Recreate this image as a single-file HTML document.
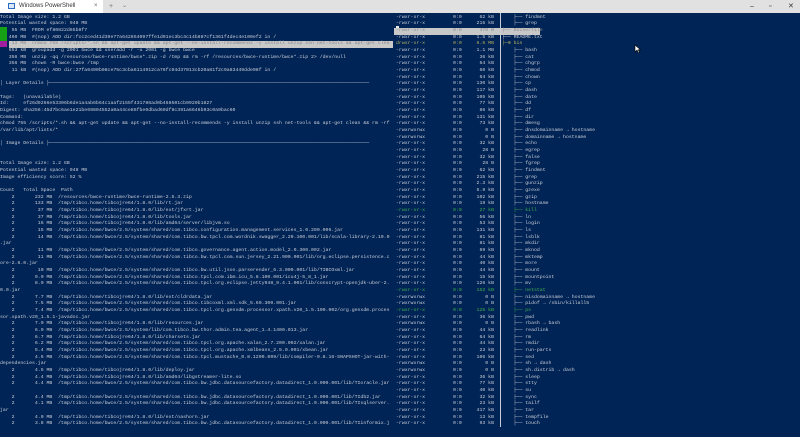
<!DOCTYPE html>
<html><head><meta charset="utf-8"><style>
*{margin:0;padding:0;box-sizing:border-box}
body{width:800px;height:437px;overflow:hidden;background:#012456;position:relative;font-family:"Liberation Mono","DejaVu Sans Mono",monospace}
.tb{position:absolute;left:0;top:0;width:800px;height:13px;background:#e1e1e1}
.tab{position:absolute;left:0;top:0;width:103px;height:13px;background:#fff;font-family:"Liberation Sans",sans-serif;font-size:6px;color:#333;line-height:13px;padding-left:19px}
.ico{position:absolute;left:8px;top:3px;width:7px;height:6px;border:1px solid #2b6cc4;background:#dbe8f8}
pre{position:absolute;font-family:"Liberation Mono","DejaVu Sans Mono",monospace;font-size:4.85px;line-height:6.67px;color:#c9cdd6;white-space:pre}
.hl{color:#8a8a8a}
.g{color:#3fb24a}.y{color:#b8b060}
</style></head><body>
<div class="tb"><div class="tab"><div class="ico"></div>Windows PowerShell<span style="position:absolute;left:94px;color:#666">×</span></div>
<span style="position:absolute;left:109px;top:0;font:7px/13px 'Liberation Sans',sans-serif;color:#777">+</span>
<span style="position:absolute;left:122px;top:0;font:6px/13px 'Liberation Sans',sans-serif;color:#777">⌄</span>
<span style="position:absolute;left:750px;top:0;font:7px/13px 'Liberation Sans',sans-serif;color:#333">–</span>
<span style="position:absolute;left:769px;top:0;font:7px/13px 'Liberation Sans',sans-serif;color:#333">▫</span>
<span style="position:absolute;left:788px;top:0;font:7px/13px 'Liberation Sans',sans-serif;color:#333">✕</span>
</div>
<div style="position:absolute;left:0;top:27px;width:7px;height:14px;background:#16a016"></div>
<div style="position:absolute;left:0;top:41px;width:7px;height:6px;background:#a020a0"></div>
<div style="position:absolute;left:9px;top:41px;width:384px;height:6.5px;background:#c8c8c8"></div>
<div style="position:absolute;left:396px;top:26px;width:3px;height:8px;background:#e8e8e8"></div>
<pre style="left:0;top:14.5px">Total Image size: 1.2 GB
Potential wasted space: 948 MB
    55 MB  FROM ef80822d65b8f7
   460 MB  #(nop) ADD dir:fcc2ced41d39e77a642854097ffe1d91ec3bc4c14b887cf1361f4dec4e100ef2 in /
<span style="color:#8a8a8a">    13 MB  chmod 755 /scripts/*.sh && apt-get update && apt-get --no-install-recommends -y install unzip ssh net-tools && apt-get clea</span>
   653 kB  groupadd -g 2001 bwce && useradd -r -u 2001 -g bwce bwce
   356 MB  unzip -qq /resources/bwce-runtime/bwce*.zip -d /tmp && rm -rf /resources/bwce-runtime/bwce*.zip 2> /dev/null
   356 MB  chown -R bwce:bwce /tmp
    11 kB  #(nop) ADD dir:27fa6490b08ce75c3cba6114912ca76fc04d37013cb20a81f2c9a83449dde08f in /

│ Layer Details ├──────────────────────────────────────────────────────────────────────────────────────────────────────────────

Tags:   (unavailable)
Id:     ef26d9266e53306b6de1a4ab6b64c1aaf2155f431786ad0b468501cb9920b1827
Digest: sha256:45d7bc6ae1e21be69804552a0a44ce86fbe0dbad60df8c391a6646b93c0a9bac60
Command:
chmod 755 /scripts/*.sh && apt-get update && apt-get --no-install-recommends -y install unzip ssh net-tools && apt-get clean && rm -rf
/var/lib/apt/lists/*

│ Image Details ├──────────────────────────────────────────────────────────────────────────────────────────────────────────────


Total Image size: 1.2 GB
Potential wasted space: 948 MB
Image efficiency score: 52 %

Count   Total Space  Path
    2       232 MB  /resources/bwce-runtime/bwce-runtime-2.5.3.zip
    2       133 MB  /tmp/tibco.home/tibcojre64/1.8.0/lib/rt.jar
    2        37 MB  /tmp/tibco.home/tibcojre64/1.8.0/lib/ext/jfxrt.jar
    2        37 MB  /tmp/tibco.home/tibcojre64/1.8.0/lib/tools.jar
    2        16 MB  /tmp/tibco.home/tibcojre64/1.8.0/lib/amd64/server/libjvm.so
    2        15 MB  /tmp/tibco.home/bwce/2.5/system/shared/com.tibco.configuration.management.services_1.0.200.006.jar
    2        14 MB  /tmp/tibco.home/bwce/2.5/system/shared/com.tibco.bw.tpcl.com.wordnik.swagger_2.20.100.001/lib/scala-library-2.10.0
.jar
    2        11 MB  /tmp/tibco.home/bwce/2.5/system/shared/com.tibco.governance.agent.action.model_2.0.300.002.jar
    2        11 MB  /tmp/tibco.home/bwce/2.5/system/shared/com.tibco.bw.tpcl.com.sun.jersey_2.21.900.001/lib/org.eclipse.persistence.c
ore-2.6.0.jar
    2        10 MB  /tmp/tibco.home/bwce/2.5/system/shared/com.tibco.bw.util.json.parserender_6.3.000.001/lib/TIBCOxml.jar
    2       9.0 MB  /tmp/tibco.home/bwce/2.5/system/shared/com.tibco.tpcl.com.ibm.icu_5.8.100.001/icu4j-5_8_1.jar
    2       8.0 MB  /tmp/tibco.home/bwce/2.5/system/shared/com.tibco.tpcl.org.eclipse.jetty948_9.4.1.001/lib/conscrypt-openjdk-uber-2.
0.0.jar
    2       7.7 MB  /tmp/tibco.home/tibcojre64/1.8.0/lib/ext/cldrdata.jar
    2       7.5 MB  /tmp/tibco.home/bwce/2.5/system/shared/com.tibco.tibcoxml.xml.sdk_5.60.300.001.jar
    2       7.4 MB  /tmp/tibco.home/bwce/2.5/system/shared/com.tibco.tpcl.org.genxdm.processor.xpath.v20_1.5.100.002/org.genxdm.proces
sor.xpath.v20_1.5.1-javadoc.jar
    2       7.0 MB  /tmp/tibco.home/tibcojre64/1.8.0/lib/resources.jar
    2       6.9 MB  /tmp/tibco.home/bwce/2.5/system/lib/com.tibco.bw.thor.admin.tea.agent_1.4.1400.013.jar
    2       6.7 MB  /tmp/tibco.home/tibcojre64/1.8.0/lib/charsets.jar
    2       6.2 MB  /tmp/tibco.home/bwce/2.5/system/shared/com.tibco.tpcl.org.apache.xalan_2.7.200.002/xalan.jar
    2       5.4 MB  /tmp/tibco.home/bwce/2.5/system/shared/com.tibco.tpcl.org.apache.xmlbeans_2.5.0.001/xbean.jar
    2       4.6 MB  /tmp/tibco.home/bwce/2.5/system/shared/com.tibco.tpcl.mustache_0.8.1200.009/lib/compiler-0.8.16-SNAPSHOT-jar-with-
dependencies.jar
    2       4.5 MB  /tmp/tibco.home/tibcojre64/1.8.0/lib/deploy.jar
    2       4.4 MB  /tmp/tibco.home/tibcojre64/1.8.0/lib/amd64/libgstreamer-lite.so
    2       4.4 MB  /tmp/tibco.home/bwce/2.5/system/shared/com.tibco.bw.jdbc.datasourcefactory.datadirect_1.0.000.001/lib/TIoracle.jar

    2       4.4 MB  /tmp/tibco.home/bwce/2.5/system/shared/com.tibco.bw.jdbc.datasourcefactory.datadirect_1.0.000.001/lib/TIdb2.jar
    2       4.1 MB  /tmp/tibco.home/bwce/2.5/system/shared/com.tibco.bw.jdbc.datasourcefactory.datadirect_1.0.000.001/lib/TIsqlserver.
jar
    2       4.0 MB  /tmp/tibco.home/tibcojre64/1.8.0/lib/ext/nashorn.jar
    2       3.8 MB  /tmp/tibco.home/bwce/2.5/system/shared/com.tibco.bw.jdbc.datasourcefactory.datadirect_1.0.000.001/lib/TIinformix.j</pre>
<div style="position:absolute;left:394px;top:28px;width:146px;height:6.5px;background:#c8c8c8"></div>
<div style="position:absolute;left:500px;top:13px;width:1px;height:414px;background:#c9cdd6"></div>
<pre style="left:396px;top:14.5px">-rwxr-xr-x
-rwxr-xr-x
<span class="hl">-rwxr-xr-x</span>
-rwxr-xr-x
<span class="y">drwxr-xr-x</span>
-rwxr-xr-x
-rwxr-xr-x
-rwxr-xr-x
-rwxr-xr-x
-rwxr-xr-x
-rwxr-xr-x
-rwxr-xr-x
-rwxr-xr-x
-rwxr-xr-x
-rwxr-xr-x
-rwxr-xr-x
-rwxr-xr-x
-rwxrwxrwx
-rwxrwxrwx
-rwxr-xr-x
-rwxr-xr-x
-rwxr-xr-x
-rwxr-xr-x
-rwxr-xr-x
-rwxr-xr-x
-rwxr-xr-x
-rwxr-xr-x
-rwxr-xr-x
-rwxr-xr-x
<span class="g">-rwxr-xr-x</span>
-rwxr-xr-x
-rwxr-xr-x
-rwxr-xr-x
-rwxr-xr-x
-rwxr-xr-x
-rwxr-xr-x
-rwxr-xr-x
-rwxr-xr-x
-rwxr-xr-x
-rwxr-xr-x
-rwxr-xr-x
<span class="g">-rwxr-xr-x</span>
-rwxrwxrwx
-rwxrwxrwx
<span class="g">-rwxr-xr-x</span>
-rwxr-xr-x
-rwxrwxrwx
-rwxr-xr-x
-rwxr-xr-x
-rwxr-xr-x
-rwxr-xr-x
-rwxr-xr-x
-rwxrwxrwx
-rwxrwxrwx
-rwxr-xr-x
-rwxr-xr-x
-rwxr-xr-x
-rwxr-xr-x
-rwxr-xr-x
-rwxr-xr-x
-rwxr-xr-x
-rwxr-xr-x</pre>
<pre style="left:453px;top:14.5px">0:0
0:0
<span class="hl">0:0</span>
0:0
<span class="y">0:0</span>
0:0
0:0
0:0
0:0
0:0
0:0
0:0
0:0
0:0
0:0
0:0
0:0
0:0
0:0
0:0
0:0
0:0
0:0
0:0
0:0
0:0
0:0
0:0
0:0
<span class="g">0:0</span>
0:0
0:0
0:0
0:0
0:0
0:0
0:0
0:0
0:0
0:0
0:0
<span class="g">0:0</span>
0:0
0:0
<span class="g">0:0</span>
0:0
0:0
0:0
0:0
0:0
0:0
0:0
0:0
0:0
0:0
0:0
0:0
0:0
0:0
0:0
0:0
0:0</pre>
<pre style="left:463px;top:14.5px;width:31px;text-align:right">62 kB
215 kB
<span class="hl">470 B</span>
1.5 kB
<span class="y">6.5 MB</span>
1.1 MB
36 kB
64 kB
60 kB
64 kB
130 kB
117 kB
105 kB
77 kB
86 kB
131 kB
73 kB
0 B
0 B
32 kB
28 B
32 kB
28 B
62 kB
215 kB
2.3 kB
5.9 kB
102 kB
19 kB
<span class="g">27 kB</span>
56 kB
53 kB
131 kB
81 kB
81 kB
69 kB
44 kB
40 kB
44 kB
15 kB
126 kB
<span class="g">152 kB</span>
0 B
0 B
<span class="g">125 kB</span>
36 kB
0 B
44 kB
64 kB
44 kB
23 kB
106 kB
0 B
0 B
36 kB
77 kB
40 kB
32 kB
23 kB
417 kB
13 kB
93 kB</pre>
<pre style="left:502px;top:14.5px">    ├── findmnt
    ├── grep
<span class="hl">├── Dockerfile</span>
├── README.txt
<span class="y">├─⊕ bin</span>
    ├── bash
    ├── cat
    ├── chgrp
    ├── chmod
    ├── chown
    ├── cp
    ├── dash
    ├── date
    ├── dd
    ├── df
    ├── dir
    ├── dmesg
    ├── dnsdomainname → hostname
    ├── domainname → hostname
    ├── echo
    ├── egrep
    ├── false
    ├── fgrep
    ├── findmnt
    ├── grep
    ├── gunzip
    ├── gzexe
    ├── gzip
    ├── hostname
<span class="g">    ├── kill</span>
    ├── ln
    ├── login
    ├── ls
    ├── lsblk
    ├── mkdir
    ├── mknod
    ├── mktemp
    ├── more
    ├── mount
    ├── mountpoint
    ├── mv
<span class="g">    ├── netstat</span>
    ├── nisdomainname → hostname
    ├── pidof → /sbin/killall5
<span class="g">    ├── ps</span>
    ├── pwd
    ├── rbash → bash
    ├── readlink
    ├── rm
    ├── rmdir
    ├── run-parts
    ├── sed
    ├── sh → dash
    ├── sh.distrib → dash
    ├── sleep
    ├── stty
    ├── su
    ├── sync
    ├── tailf
    ├── tar
    ├── tempfile
    ├── touch</pre>
<svg style="position:absolute;left:634px;top:44px" width="7" height="10"><path d="M1 1 L1 8 L3 6 L4.5 9 L5.5 8.5 L4.3 5.8 L6.5 5.8 Z" fill="#fff" stroke="#000" stroke-width="0.6"/></svg>
</body></html>
